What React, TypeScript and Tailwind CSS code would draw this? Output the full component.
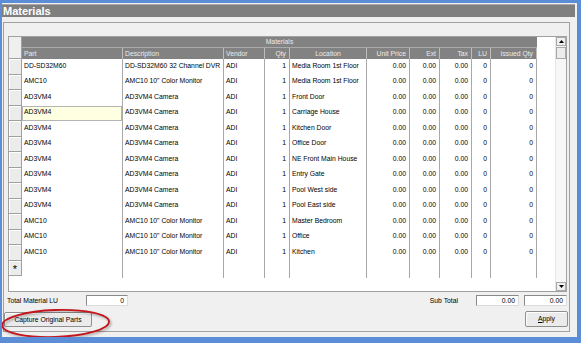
type Col = { label: string; w: string; head: string; cell: string };

const cols: Col[] = [
  { label: 'Part', w: 'w-[101px]', head: 'justify-start pl-[2px]', cell: 'justify-start pl-[2px]' },
  { label: 'Description', w: 'w-[101px]', head: 'justify-start pl-[2px]', cell: 'justify-start pl-[2px]' },
  { label: 'Vendor', w: 'w-[41px]', head: 'justify-start pl-[2px]', cell: 'justify-start pl-[2px]' },
  { label: 'Qty', w: 'w-[25px]', head: 'justify-end pr-[3px]', cell: 'justify-end pr-[3px]' },
  { label: 'Location', w: 'w-[77px]', head: 'justify-center', cell: 'justify-start pl-[2px]' },
  { label: 'Unit Price', w: 'w-[43px]', head: 'justify-end pr-[3px]', cell: 'justify-end pr-[3px]' },
  { label: 'Ext', w: 'w-[30px]', head: 'justify-end pr-[3px]', cell: 'justify-end pr-[3px]' },
  { label: 'Tax', w: 'w-[32px]', head: 'justify-end pr-[3px]', cell: 'justify-end pr-[3px]' },
  { label: 'LU', w: 'w-[19px]', head: 'justify-end pr-[3px]', cell: 'justify-end pr-[3px]' },
  { label: 'Issued Qty', w: 'w-[46px]', head: 'justify-end pr-[3px]', cell: 'justify-end pr-[3px]' },
];

const DVR = 'DD-SD32M60 32 Channel DVR';
const MON = 'AMC10 10" Color Monitor';
const CAM = 'AD3VM4 Camera';

const items: [string, string, string][] = [
  ['DD-SD32M60', DVR, 'Media Room 1st Floor'],
  ['AMC10', MON, 'Media Room 1st Floor'],
  ['AD3VM4', CAM, 'Front Door'],
  ['AD3VM4', CAM, 'Carriage House'],
  ['AD3VM4', CAM, 'Kitchen Door'],
  ['AD3VM4', CAM, 'Office Door'],
  ['AD3VM4', CAM, 'NE Front Main House'],
  ['AD3VM4', CAM, 'Entry Gate'],
  ['AD3VM4', CAM, 'Pool West side'],
  ['AD3VM4', CAM, 'Pool East side'],
  ['AMC10', MON, 'Master Bedroom'],
  ['AMC10', MON, 'Office'],
  ['AMC10', MON, 'Kitchen'],
];

function Arrow({ up }: { up?: boolean }) {
  return (
    <div className="h-[9px] flex items-center justify-center bg-[#f0f0f0] border border-[#a9a9a9]">
      <svg width="5" height="3" viewBox="0 0 5 3">
        <polygon points={up ? '2.5,0 5,3 0,3' : '0,0 5,0 2.5,3'} fill="#000" />
      </svg>
    </div>
  );
}

export default function App() {
  return (
    <div
      className="relative w-[581px] h-[343px] overflow-hidden bg-[#f0f0f0] border-l-2 border-t-[3px] border-r-4 border-b-[6px] border-[#5b8ed6] text-[6.8px] leading-[8px] text-black"
      style={{ fontFamily: '"Liberation Sans", Arial, sans-serif' }}
    >
      {/* title bar */}
      <div className="mt-[1px] mr-[2px] h-[13px] bg-[#7f7f7f] border-t border-[#a8a8a8] flex items-center pl-[1px]">
        <span className="text-[11px] leading-[12px] font-bold text-white">Materials</span>
      </div>

      {/* group frame */}
      <div className="mt-[5px] ml-[1px] w-[567px] h-[310px] border border-[#a0a0a0] flex flex-col">
        <div className="pt-[13px] pl-[4px]">
          <div className="w-[559px] h-[256px] bg-white border border-[#a0a0a0] flex">
            {/* row headers */}
            <div className="w-[13px] flex flex-col">
              <div className="h-[22px] bg-[#efefef] border-r border-b border-[#a0a0a0]" />
              {items.map((_, i) => (
                <div key={i} className="h-[15.5px] bg-[#ececec] border-r border-b border-[#a0a0a0] shadow-[inset_1px_1px_0_#fff]" />
              ))}
              <div className="h-[15.5px] bg-[#ececec] border-r border-b border-[#a0a0a0] shadow-[inset_1px_1px_0_#fff] flex items-center justify-center text-[11px] leading-[10px] pt-[3px]">
                *
              </div>
            </div>

            {/* columns */}
            <div className="w-[515px] flex flex-col">
              <div className="h-[11px] bg-[#828282] border-b border-[#ababab] flex items-center justify-center text-[#ececec]">
                Materials
              </div>
              <div className="h-[11px] bg-[#828282] flex">
                {cols.map((c) => (
                  <div key={c.label} className={`${c.w} ${c.head} flex items-center border-r border-[#bdbdbd] text-[#ececec]`}>
                    {c.label}
                  </div>
                ))}
              </div>
              {items.map(([part, desc, loc], i) => {
                const vals = [part, desc, 'ADI', '1', loc, '0.00', '0.00', '0.00', '0', '0'];
                return (
                  <div key={i} className="h-[15.5px] flex">
                    {cols.map((c, j) => (
                      <div
                        key={c.label}
                        className={`${c.w} ${c.cell} flex items-start pt-[2.5px] border-r border-[#a8a8a8] whitespace-nowrap overflow-hidden ${
                          i === 3 && j === 0 ? 'bg-[#ffffe1] shadow-[inset_0_0_0_1px_#b4b4b4]' : ''
                        }`}
                      >
                        {vals[j]}
                      </div>
                    ))}
                  </div>
                );
              })}
              <div className="h-[17px] flex">
                {cols.map((c) => (
                  <div key={c.label} className={`${c.w} border-r border-[#a8a8a8]`} />
                ))}
              </div>
            </div>

            <div className="flex-1" />

            {/* scrollbar */}
            <div className="w-[11px] flex flex-col bg-[#f7f7f7] border-l border-[#e6e6e6]">
              <Arrow up />
              <div className="h-[12px] mt-[1px] bg-[#ececec] border border-[#a9a9a9]" />
              <div className="flex-1" />
              <Arrow />
            </div>
          </div>
        </div>

        {/* totals */}
        <div className="mt-[3px] h-[11px] flex items-center pl-[3px] pr-[2px]">
          <span className="w-[79px]">Total Material LU</span>
          <div className="w-[42px] h-[11px] bg-white border border-[#8a8a8a] border-r-[#dcdcdc] border-b-[#dcdcdc] flex items-center justify-end pr-[3px]">
            0
          </div>
          <div className="flex-1" />
          <span className="mr-[18px]">Sub Total</span>
          <div className="w-[43px] h-[11px] bg-white border border-[#8a8a8a] border-r-[#dcdcdc] border-b-[#dcdcdc] flex items-center justify-end pr-[3px]">
            0.00
          </div>
          <div className="ml-[5px] w-[43px] h-[11px] bg-white border border-[#8a8a8a] border-r-[#dcdcdc] border-b-[#dcdcdc] flex items-center justify-end pr-[3px]">
            0.00
          </div>
        </div>

        {/* buttons */}
        <div className="mt-[5px] flex items-end pr-[1px]">
          <button className="w-[88px] h-[15px] bg-[#ebebeb] border border-[#8f8f8f] rounded-[2px] shadow-[inset_1px_1px_0_#fff] flex items-center justify-center">
            Capture Original Parts
          </button>
          <div className="flex-1" />
          <button className="w-[43px] h-[16px] bg-[#ebebeb] border border-[#8f8f8f] rounded-[2px] shadow-[inset_1px_1px_0_#fff] flex items-center justify-center">
            <span className="underline">A</span>pply
          </button>
        </div>
      </div>

      {/* red annotation ellipse */}
      <svg className="absolute left-[-2px] top-[303px]" width="114" height="36" viewBox="0 0 114 36">
        <defs>
          <filter id="blur" x="-10%" y="-30%" width="120%" height="160%">
            <feGaussianBlur stdDeviation="1" />
          </filter>
        </defs>
        <ellipse cx="57" cy="19" rx="53.5" ry="13.5" fill="none" stroke="rgba(0,0,0,0.3)" strokeWidth="2" filter="url(#blur)" transform="rotate(-2 57 18)" />
        <ellipse cx="55.5" cy="17.5" rx="53.5" ry="13.5" fill="none" stroke="#c4161c" strokeWidth="1.8" transform="rotate(-2 55 17)" />
      </svg>
    </div>
  );
}
